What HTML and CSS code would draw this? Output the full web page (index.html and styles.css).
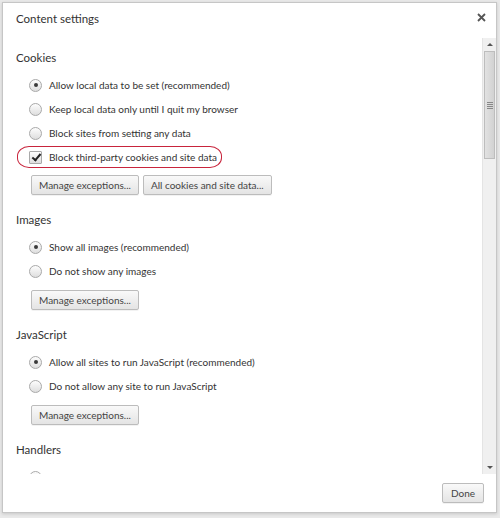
FILE: index.html
```html
<!DOCTYPE html>
<html lang="en">
<head>
  <meta charset="UTF-8">
  <title>Content settings</title>
  <link rel="stylesheet" href="styles.css">
</head>
<body>
  <div class="dialog">
    <div class="dialog-header">
      <span class="dialog-title">Content settings</span>
      <button class="close-btn" title="Close">
        <svg width="9" height="9" viewBox="0 0 9 9"><path d="M1 1 L8 8 M8 1 L1 8" stroke="#555" stroke-width="1.8" fill="none"/></svg>
      </button>
    </div>

    <div class="dialog-body">
      <div class="scroll-content">
        <section class="group">
          <h3>Cookies</h3>
          <label class="option"><span class="radio checked"></span>Allow local data to be set (recommended)</label>
          <label class="option"><span class="radio"></span>Keep local data only until I quit my browser</label>
          <label class="option"><span class="radio"></span>Block sites from setting any data</label>
          <label class="option highlighted"><span class="checkbox checked"></span>Block third-party cookies and site data</label>
          <div class="buttons">
            <button class="btn">Manage exceptions...</button>
            <button class="btn">All cookies and site data...</button>
          </div>
        </section>

        <section class="group">
          <h3>Images</h3>
          <label class="option"><span class="radio checked"></span>Show all images (recommended)</label>
          <label class="option"><span class="radio"></span>Do not show any images</label>
          <div class="buttons">
            <button class="btn">Manage exceptions...</button>
          </div>
        </section>

        <section class="group">
          <h3>JavaScript</h3>
          <label class="option"><span class="radio checked"></span>Allow all sites to run JavaScript (recommended)</label>
          <label class="option"><span class="radio"></span>Do not allow any site to run JavaScript</label>
          <div class="buttons">
            <button class="btn">Manage exceptions...</button>
          </div>
        </section>

        <section class="group">
          <h3>Handlers</h3>
          <div class="option"><span class="radio"></span></div>
        </section>
      </div>

      <div class="scrollbar">
        <div class="arrow up"></div>
        <div class="track">
          <div class="thumb"><span class="grip"></span></div>
        </div>
        <div class="arrow down"></div>
      </div>
    </div>

    <div class="dialog-footer">
      <button class="btn done">Done</button>
    </div>
  </div>
</body>
</html>
```

FILE: styles.css
```css
html, body {
  margin: 0;
  padding: 0;
}
body {
  background-color: #e9e9e9;
  font-family: Lato, Arial, sans-serif;
  font-size: 10px;
  color: #333;
  width: 500px;
  height: 518px;
  overflow: hidden;
}
.dialog {
  margin: 2px 3px 0 2px;
  width: 493px;
  height: 509px;
  background: #fff;
  border: 1px solid #c6c6c6;
  box-shadow: 0 1px 3px rgba(0, 0, 0, 0.15);
  display: flex;
  flex-direction: column;
}
.dialog-header {
  height: 35px;
  display: flex;
  justify-content: space-between;
  align-items: flex-start;
  padding: 0 10px 0 13px;
}
.dialog-title {
  font-size: 11.5px;
  color: #333;
  margin-top: 9px;
}
.close-btn {
  background: none;
  border: none;
  padding: 0;
  margin-top: 7px;
  cursor: pointer;
}
.dialog-body {
  height: 436px;
  display: flex;
}
.scroll-content {
  flex: 1;
  overflow: hidden;
  padding: 10px 0 0 13px;
}
.group {
  margin-bottom: 15px;
}
.group h3 {
  margin: 0 0 5px;
  font-size: 11.5px;
  font-weight: normal;
  line-height: 20px;
  color: #333;
}
.option {
  display: flex;
  align-items: center;
  height: 24px;
  padding-left: 13px;
  white-space: nowrap;
}
.radio, .checkbox {
  width: 13px;
  height: 13px;
  margin-right: 7px;
  border: 1px solid #a9a9a9;
  background: linear-gradient(#fdfdfd, #dedede);
  box-sizing: border-box;
  position: relative;
  flex-shrink: 0;
}
.radio {
  border-radius: 50%;
}
.radio.checked::after {
  content: "";
  position: absolute;
  left: 3.5px;
  top: 3.5px;
  width: 4px;
  height: 4px;
  border-radius: 50%;
  background: #3a3a3a;
}
.checkbox {
  border-radius: 1px;
}
.checkbox.checked::after {
  content: "";
  position: absolute;
  left: 3.5px;
  top: 0;
  width: 3px;
  height: 7px;
  border: solid #222;
  border-width: 0 2px 2px 0;
  transform: rotate(40deg);
}
.highlighted {
  margin-left: 1px;
  padding-left: 11px;
  width: 205px;
  box-sizing: border-box;
  border: 1.5px solid #c8243c;
  border-radius: 12px / 10px;
  height: 22px;
  margin-top: 1px;
  margin-bottom: 1px;
}
.buttons {
  display: flex;
  gap: 4px;
  padding-left: 15px;
  margin-top: 7px;
}
.btn {
  font-family: Lato, Arial, sans-serif;
  font-size: 10px;
  color: #444;
  height: 20px;
  padding: 0 7px;
  background: linear-gradient(#f9f9f9, #e4e4e4);
  border: 1px solid #bcbcbc;
  border-radius: 2px;
  box-shadow: 0 1px 0 rgba(0, 0, 0, 0.05);
}
.scrollbar {
  width: 13px;
  display: flex;
  flex-direction: column;
  background: #f0f0f0;
  border-left: 1px solid #e4e4e4;
}
.arrow {
  height: 13px;
  position: relative;
}
.arrow::after {
  content: "";
  position: absolute;
  left: 4px;
  border-left: 3px solid transparent;
  border-right: 3px solid transparent;
}
.arrow.up::after {
  top: 5px;
  border-bottom: 3px solid #555;
}
.arrow.down::after {
  top: 5px;
  border-top: 3px solid #555;
}
.track {
  flex: 1;
  padding: 0 1px;
}
.thumb {
  height: 106px;
  background: linear-gradient(to right, #e2e2e2, #d2d2d2);
  border: 1px solid #bdbdbd;
  display: flex;
  align-items: center;
  justify-content: center;
}
.grip {
  width: 6px;
  height: 7px;
  background: repeating-linear-gradient(#888 0 1px, transparent 1px 2px);
}
.dialog-footer {
  flex: 1;
  display: flex;
  justify-content: flex-end;
  align-items: flex-start;
  padding: 9px 12px 0 0;
}
.btn.done {
  width: 42px;
  padding: 0;
}
```
